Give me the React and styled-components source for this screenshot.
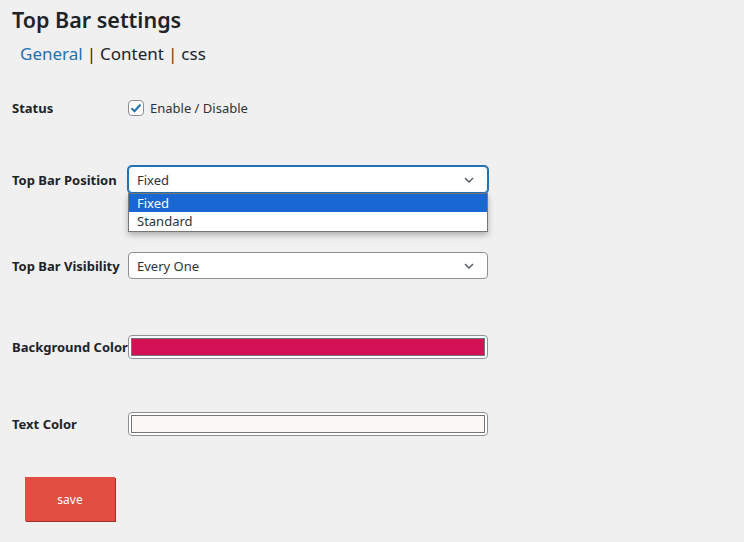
import React from "react";
import styled, { createGlobalStyle } from "styled-components";

const GlobalStyle = createGlobalStyle`
  html, body {
    margin: 0;
    padding: 0;
    background: #f0f0f1;
  }
  body {
    font-family: "Noto Sans", "Open Sans", Arial, sans-serif;
    color: #1d2327;
  }
`;

const Page = styled.div`
  width: 744px;
  height: 542px;
  box-sizing: border-box;
  padding: 5px 12px 0 12px;
  overflow: hidden;
`;

const Title = styled.h1`
  margin: 0;
  font-size: 21.5px;
  font-weight: 600;
  line-height: 30px;
  color: #1d2327;
`;

const Tabs = styled.div`
  display: flex;
  align-items: center;
  gap: 4px;
  margin: 7px 0 0 8px;
  font-size: 17px;
  line-height: 24px;
`;

const Tab = styled.span`
  color: ${(p) => (p.$active ? "#2271b1" : "#1d2327")};
`;

const Sep = styled.span`
  color: ${(p) => p.$color};
`;

const Form = styled.div`
  margin-top: 22px;
`;

const Row = styled.div`
  display: flex;
  align-items: ${(p) => (p.$top ? "flex-start" : "center")};
  box-sizing: border-box;
  padding-top: ${(p) => p.$top || 0}px;
  height: ${(p) => p.$height}px;
`;

const Label = styled.div`
  width: 116px;
  flex-shrink: 0;
  font-size: 13px;
  font-weight: 700;
  line-height: ${(p) => (p.$tall ? "29px" : "normal")};
  white-space: nowrap;
  color: #1d2327;
`;

const CheckLabel = styled.label`
  display: flex;
  align-items: center;
  gap: 6px;
  font-size: 13px;
  color: #2c3338;
`;

const CheckBox = styled.span`
  width: 14px;
  height: 14px;
  border: 1px solid #8c8f94;
  border-radius: 4px;
  background: #fff;
  display: flex;
  align-items: center;
  justify-content: center;
`;

const SelectWrap = styled.div`
  position: relative;
  width: 360px;
`;

const Select = styled.div`
  box-sizing: border-box;
  height: 27px;
  display: flex;
  align-items: center;
  justify-content: space-between;
  padding: 0 13px 0 8px;
  background: #fff;
  border: 1px solid ${(p) => (p.$focus ? "#2271b1" : "#8c8f94")};
  box-shadow: ${(p) => (p.$focus ? "0 0 0 1px #2271b1" : "none")};
  border-radius: 4px;
  font-size: 13px;
  color: #2c3338;
`;

const Menu = styled.div`
  position: absolute;
  top: 27px;
  left: 0;
  width: 360px;
  box-sizing: border-box;
  background: #fff;
  border: 1px solid #767676;
  box-shadow: 0 3px 6px rgba(0, 0, 0, 0.28);
  padding-bottom: 1px;
  z-index: 2;
`;

const Option = styled.div`
  height: 18px;
  line-height: 18px;
  padding-left: 8px;
  font-size: 13px;
  color: ${(p) => (p.$selected ? "#fff" : "#2c3338")};
  background: ${(p) => (p.$selected ? "#1967d2" : "transparent")};
`;

const ColorBox = styled.div`
  box-sizing: border-box;
  width: 360px;
  height: 24px;
  padding: 2px;
  background: #fff;
  border: 1px solid #8c8f94;
  border-radius: 4px;
`;

const Swatch = styled.div`
  height: 100%;
  box-sizing: border-box;
  border: 1px solid #767676;
  background: ${(p) => p.$color};
`;

const SaveButton = styled.button`
  margin: 21px 0 0 13px;
  width: 90px;
  height: 44px;
  border: none;
  border-radius: 0;
  background: #e24e42;
  box-shadow: 1px 1px 0 #9c2f26;
  color: #fff;
  font-family: inherit;
  font-size: 12px;
  cursor: pointer;
`;

const Chevron = () => (
  <svg width="10" height="6" viewBox="0 0 10 6">
    <path d="M1 1l4 4 4-4" fill="none" stroke="#50575e" strokeWidth="1.4" />
  </svg>
);

const Check = () => (
  <svg width="12" height="10" viewBox="0 0 12 10">
    <path d="M1.5 5.2l3 3L10.5 1.5" fill="none" stroke="#2271b1" strokeWidth="2" />
  </svg>
);

const App = () => {
  return (
    <Page>
      <GlobalStyle />
      <Title>Top Bar settings</Title>
      <Tabs>
        <Tab $active>General</Tab>
        <Sep $color="#4a1410">|</Sep>
        <Tab>Content</Tab>
        <Sep $color="#6a4208">|</Sep>
        <Tab>css</Tab>
      </Tabs>
      <Form>
        <Row $height={40}>
          <Label>Status</Label>
          <CheckLabel>
            <CheckBox>
              <Check />
            </CheckBox>
            Enable / Disable
          </CheckLabel>
        </Row>
        <Row $height={101} $top={38}>
          <Label $tall>Top Bar Position</Label>
          <SelectWrap>
            <Select $focus>
              Fixed
              <Chevron />
            </Select>
            <Menu>
              <Option $selected>Fixed</Option>
              <Option>Standard</Option>
            </Menu>
          </SelectWrap>
        </Row>
        <Row $height={73}>
          <Label>Top Bar Visibility</Label>
          <SelectWrap>
            <Select>
              Every One
              <Chevron />
            </Select>
          </SelectWrap>
        </Row>
        <Row $height={90}>
          <Label>Background Color</Label>
          <ColorBox>
            <Swatch $color="#d41154" />
          </ColorBox>
        </Row>
        <Row $height={64}>
          <Label>Text Color</Label>
          <ColorBox>
            <Swatch $color="#fbf7f6" />
          </ColorBox>
        </Row>
      </Form>
      <SaveButton>save</SaveButton>
    </Page>
  );
};

export default App;
